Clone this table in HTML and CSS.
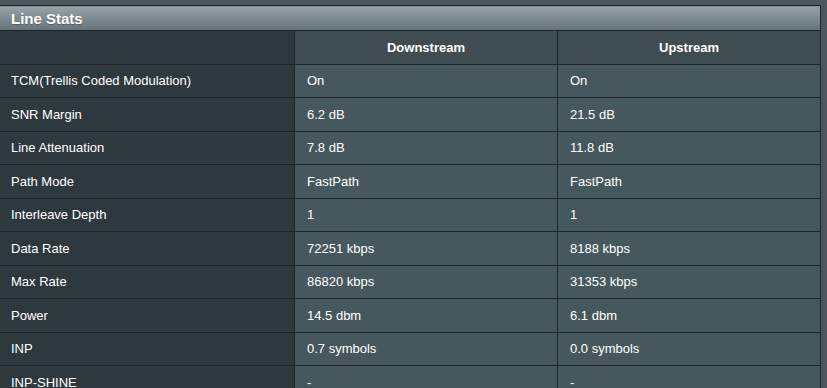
FILE: index.html
```html
<!DOCTYPE html>
<html lang="en">
<head>
  <meta charset="UTF-8">
  <title>Line Stats</title>
  <link rel="stylesheet" href="styles.css">
</head>
<body>

<div class="panel">
  <table class="stats">
    <colgroup>
      <col class="col-label">
      <col class="col-down">
      <col>
    </colgroup>
    <thead>
      <tr class="title-row">
        <th colspan="3">Line Stats</th>
      </tr>
      <tr class="head-row">
        <th class="label-col"></th>
        <th>Downstream</th>
        <th>Upstream</th>
      </tr>
    </thead>
    <tbody>
      <tr><th>TCM(Trellis Coded Modulation)</th><td>On</td><td>On</td></tr>
      <tr><th>SNR Margin</th><td>6.2 dB</td><td>21.5 dB</td></tr>
      <tr><th>Line Attenuation</th><td>7.8 dB</td><td>11.8 dB</td></tr>
      <tr><th>Path Mode</th><td>FastPath</td><td>FastPath</td></tr>
      <tr><th>Interleave Depth</th><td>1</td><td>1</td></tr>
      <tr><th>Data Rate</th><td>72251 kbps</td><td>8188 kbps</td></tr>
      <tr><th>Max Rate</th><td>86820 kbps</td><td>31353 kbps</td></tr>
      <tr><th>Power</th><td>14.5 dbm</td><td>6.1 dbm</td></tr>
      <tr><th>INP</th><td>0.7 symbols</td><td>0.0 symbols</td></tr>
      <tr><th>INP-SHINE</th><td>-</td><td>-</td></tr>
    </tbody>
  </table>
</div>

</body>
</html>
```

FILE: styles.css
```css
body {
  margin: 0;
  background-color: #4b575d;
  font-family: 'Liberation Sans', Arial, sans-serif;
  font-size: 13px;
  color: #fff;
  overflow: hidden;
}

.panel {
  margin-top: 5px;
  margin-left: -2px;
  width: 823px;
}

.stats {
  width: 100%;
  border-collapse: collapse;
  table-layout: fixed;
  border: 1px solid #1f2528;
}

.col-label {
  width: 296px;
}

.col-down {
  width: 263px;
}

.stats th,
.stats td {
  border: 1px solid #1f2528;
  padding: 0 12px;
  text-align: left;
  font-weight: normal;
}

/* title bar */
.title-row {
  height: 25px;
}

.title-row th {
  font-size: 15px;
  font-weight: bold;
  text-shadow: 0 1px 1px rgba(0,0,0,0.25);
  background: linear-gradient(to bottom, #96a3a8, #65727a);
}

.head-row {
  height: 33.5px;
}

.head-row th {
  font-weight: bold;
  text-align: center;
  background-color: #3f4d52;
}

.head-row th.label-col {
  background-color: #2e393e;
}

tbody tr {
  height: 33.5px;
}

tbody th {
  background-color: #2e393e;
}

tbody td {
  background-color: #46585d;
}
```
